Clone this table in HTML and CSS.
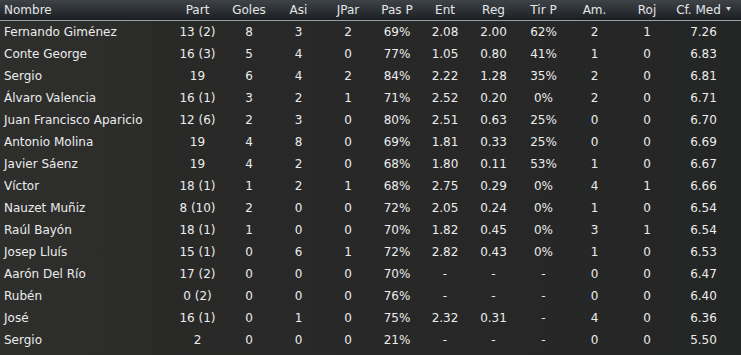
FILE: index.html
```html
<!DOCTYPE html>
<html lang="es">
<head>
<meta charset="utf-8">
<title>Estadísticas</title>
<link rel="stylesheet" href="styles.css">
</head>
<body>
<div class="stats">
  <div class="row head">
    <div class="name">Nombre</div>
    <div>Part</div><div>Goles</div><div>Asi</div><div>JPar</div><div>Pas P</div><div>Ent</div><div>Reg</div><div>Tir P</div><div>Am.</div><div>Roj</div>
    <div class="sorted">Cf. Med <svg class="arrow" width="5" height="4" viewBox="0 0 5 4"><path d="M0 0H5L2.5 4Z" fill="#d8d8d8"/></svg></div>
  </div>
  <div class="body">
    <div class="row"><div class="name">Fernando Giménez</div><div>13 (2)</div><div>8</div><div>3</div><div>2</div><div>69%</div><div>2.08</div><div>2.00</div><div>62%</div><div>2</div><div>1</div><div>7.26</div></div>
    <div class="row"><div class="name">Conte George</div><div>16 (3)</div><div>5</div><div>4</div><div>0</div><div>77%</div><div>1.05</div><div>0.80</div><div>41%</div><div>1</div><div>0</div><div>6.83</div></div>
    <div class="row"><div class="name">Sergio</div><div>19</div><div>6</div><div>4</div><div>2</div><div>84%</div><div>2.22</div><div>1.28</div><div>35%</div><div>2</div><div>0</div><div>6.81</div></div>
    <div class="row"><div class="name">Álvaro Valencia</div><div>16 (1)</div><div>3</div><div>2</div><div>1</div><div>71%</div><div>2.52</div><div>0.20</div><div>0%</div><div>2</div><div>0</div><div>6.71</div></div>
    <div class="row"><div class="name">Juan Francisco Aparicio</div><div>12 (6)</div><div>2</div><div>3</div><div>0</div><div>80%</div><div>2.51</div><div>0.63</div><div>25%</div><div>0</div><div>0</div><div>6.70</div></div>
    <div class="row"><div class="name">Antonio Molina</div><div>19</div><div>4</div><div>8</div><div>0</div><div>69%</div><div>1.81</div><div>0.33</div><div>25%</div><div>0</div><div>0</div><div>6.69</div></div>
    <div class="row"><div class="name">Javier Sáenz</div><div>19</div><div>4</div><div>2</div><div>0</div><div>68%</div><div>1.80</div><div>0.11</div><div>53%</div><div>1</div><div>0</div><div>6.67</div></div>
    <div class="row"><div class="name">Víctor</div><div>18 (1)</div><div>1</div><div>2</div><div>1</div><div>68%</div><div>2.75</div><div>0.29</div><div>0%</div><div>4</div><div>1</div><div>6.66</div></div>
    <div class="row"><div class="name">Nauzet Muñiz</div><div>8 (10)</div><div>2</div><div>0</div><div>0</div><div>72%</div><div>2.05</div><div>0.24</div><div>0%</div><div>1</div><div>0</div><div>6.54</div></div>
    <div class="row"><div class="name">Raúl Bayón</div><div>18 (1)</div><div>1</div><div>0</div><div>0</div><div>70%</div><div>1.82</div><div>0.45</div><div>0%</div><div>3</div><div>1</div><div>6.54</div></div>
    <div class="row"><div class="name">Josep Lluís</div><div>15 (1)</div><div>0</div><div>6</div><div>1</div><div>72%</div><div>2.82</div><div>0.43</div><div>0%</div><div>1</div><div>0</div><div>6.53</div></div>
    <div class="row"><div class="name">Aarón Del Río</div><div>17 (2)</div><div>0</div><div>0</div><div>0</div><div>70%</div><div>-</div><div>-</div><div>-</div><div>0</div><div>0</div><div>6.47</div></div>
    <div class="row"><div class="name">Rubén</div><div>0 (2)</div><div>0</div><div>0</div><div>0</div><div>76%</div><div>-</div><div>-</div><div>-</div><div>0</div><div>0</div><div>6.40</div></div>
    <div class="row"><div class="name">José</div><div>16 (1)</div><div>0</div><div>1</div><div>0</div><div>75%</div><div>2.32</div><div>0.31</div><div>-</div><div>4</div><div>0</div><div>6.36</div></div>
    <div class="row"><div class="name">Sergio</div><div>2</div><div>0</div><div>0</div><div>0</div><div>21%</div><div>-</div><div>-</div><div>-</div><div>0</div><div>0</div><div>5.50</div></div>
  </div>
</div>
</body>
</html>
```
FILE: styles.css
```css
html, body {
  margin: 0;
  padding: 0;
  background: #262725;
}
body {
  width: 741px;
  height: 355px;
  overflow: hidden;
  font-family: "DejaVu Sans", "Liberation Sans", sans-serif;
  font-size: 12px;
  color: #ececec;
}
.stats {
  width: 741px;
  height: 355px;
  background: linear-gradient(to right, #2e2f2d 0, #2c2d2b 152px, #292a28 153px, #242525 100%);
}
.row {
  display: grid;
  grid-template-columns: 171px 53px 50px 49px 50px 48px 48px 49px 51px 51px 54px 59px 8px;
  height: 22px;
  align-items: center;
  text-align: center;
  white-space: nowrap;
}
.row .name {
  text-align: left;
  padding-left: 4px;
}
.head {
  height: 20px;
  border-bottom: 1px solid #9a9ea2;
  background: linear-gradient(to bottom, #3e4348 0, #2d3135 50%, #1c1e21 100%);
  color: #e4e6e8;
}
.head > div {
  line-height: 20px;
}
.sorted {
  display: flex;
  align-items: center;
  justify-content: center;
  gap: 5px;
}
.arrow {
  display: block;
  margin-top: -3px;
}
```
